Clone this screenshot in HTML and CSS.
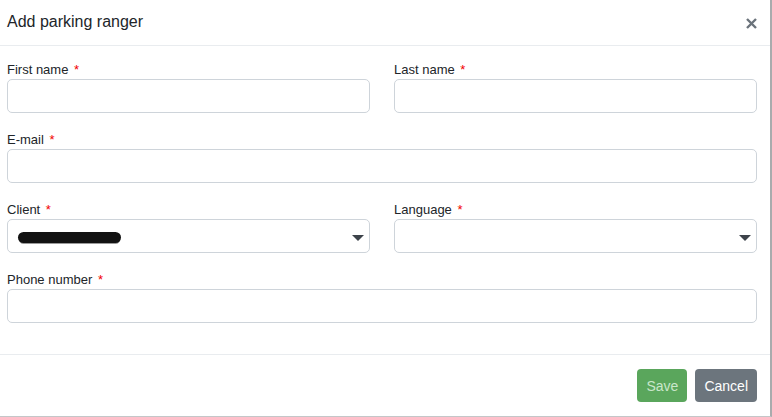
FILE: index.html
```html
<!DOCTYPE html>
<html lang="en">
<head>
  <meta charset="UTF-8" />
  <title>Add parking ranger</title>
  <link rel="stylesheet" href="styles.css">
</head>
<body>

  <div class="modal">
    <div class="modal-header">
      <h5 class="modal-title">Add parking ranger</h5>
      <button class="close" aria-label="Close">
        <svg width="11" height="11" viewBox="0 0 11 11">
          <path d="M1 1 L10 10 M10 1 L1 10" stroke="#6b737b" stroke-width="2.4" stroke-linecap="butt" fill="none"/>
        </svg>
      </button>
    </div>

    <form class="modal-body" autocomplete="off">
      <div class="form-row">
        <div class="form-group">
          <label>First name <span class="req">*</span></label>
          <input type="text" class="form-control" />
        </div>
        <div class="form-group">
          <label>Last name <span class="req">*</span></label>
          <input type="text" class="form-control" />
        </div>
      </div>

      <div class="form-group">
        <label>E-mail <span class="req">*</span></label>
        <input type="text" class="form-control" />
      </div>

      <div class="form-row">
        <div class="form-group">
          <label>Client <span class="req">*</span></label>
          <div class="form-control select">
            <span class="redacted"></span>
            <svg class="caret" width="12" height="6" viewBox="0 0 12 6"><path d="M0 0 H12 L6 6 Z" fill="#3d434a"/></svg>
          </div>
        </div>
        <div class="form-group">
          <label>Language <span class="req">*</span></label>
          <div class="form-control select">
            <span></span>
            <svg class="caret" width="12" height="6" viewBox="0 0 12 6"><path d="M0 0 H12 L6 6 Z" fill="#3d434a"/></svg>
          </div>
        </div>
      </div>

      <div class="form-group">
        <label>Phone number <span class="req">*</span></label>
        <input type="text" class="form-control" />
      </div>
    </form>

    <div class="modal-footer">
      <button class="btn btn-success" disabled>Save</button>
      <button class="btn btn-secondary">Cancel</button>
    </div>
  </div>

</body>
</html>
```

FILE: styles.css
```css
/* Base */
body {
  margin: 0;
  font-family: "Liberation Sans", Arial, sans-serif;
  color: #212529;
  background: #fff;
}

.modal {
  width: 770px;
  background: #fff;
  border-right: 2px solid #a9abad;
  border-bottom: 1px solid #c4c6c8;
}

/* Header */
.modal-header {
  display: flex;
  justify-content: space-between;
  align-items: center;
  padding: 12px 13px 13px 7px;
  border-bottom: 1px solid #e9ecef;
}

.modal-title {
  margin: 0;
  font-size: 16px;
  line-height: 20px;
  font-weight: 400;
  color: #212529;
}

.close {
  display: flex;
  padding: 0;
  border: none;
  background: none;
  cursor: pointer;
  margin-top: 2px;
}

/* Body */
.modal-body {
  padding: 16px 13px 12px 7px;
}

.form-row {
  display: grid;
  grid-template-columns: 1fr 1fr;
  column-gap: 24px;
}

.form-group {
  margin-bottom: 19px;
}

label {
  display: block;
  font-size: 13px;
  line-height: 16px;
  margin-bottom: 1px;
  color: #212529;
}

.req {
  color: #f20000;
  margin-left: 2px;
}

.form-control {
  display: block;
  width: 100%;
  height: 34px;
  box-sizing: border-box;
  border: 1px solid #ced4da;
  border-radius: 5px;
  background: #fff;
  font-family: inherit;
  font-size: 13px;
  padding: 0 10px;
  margin: 0;
}

.select {
  display: flex;
  align-items: center;
  justify-content: space-between;
  padding: 0 5px 0 10px;
}

.caret {
  margin-top: 4px;
}

.redacted {
  display: inline-block;
  width: 103px;
  height: 11px;
  margin-top: 3px;
  border-radius: 6px;
  background: #121212;
  box-shadow: 0 2px 0 -1px #9a9a9a;
}

/* Footer */
.modal-footer {
  display: flex;
  justify-content: flex-end;
  gap: 8px;
  padding: 14px 13px 14px 7px;
  border-top: 1px solid #e9ecef;
}

.btn {
  height: 33px;
  padding: 0 9px;
  border: none;
  border-radius: 4px;
  font-family: inherit;
  font-size: 14px;
  cursor: pointer;
}

.btn-success {
  background: #5aa65c;
  color: #c9e6ca;
}

.btn-secondary {
  background: #6c757d;
  color: #fff;
}
```
